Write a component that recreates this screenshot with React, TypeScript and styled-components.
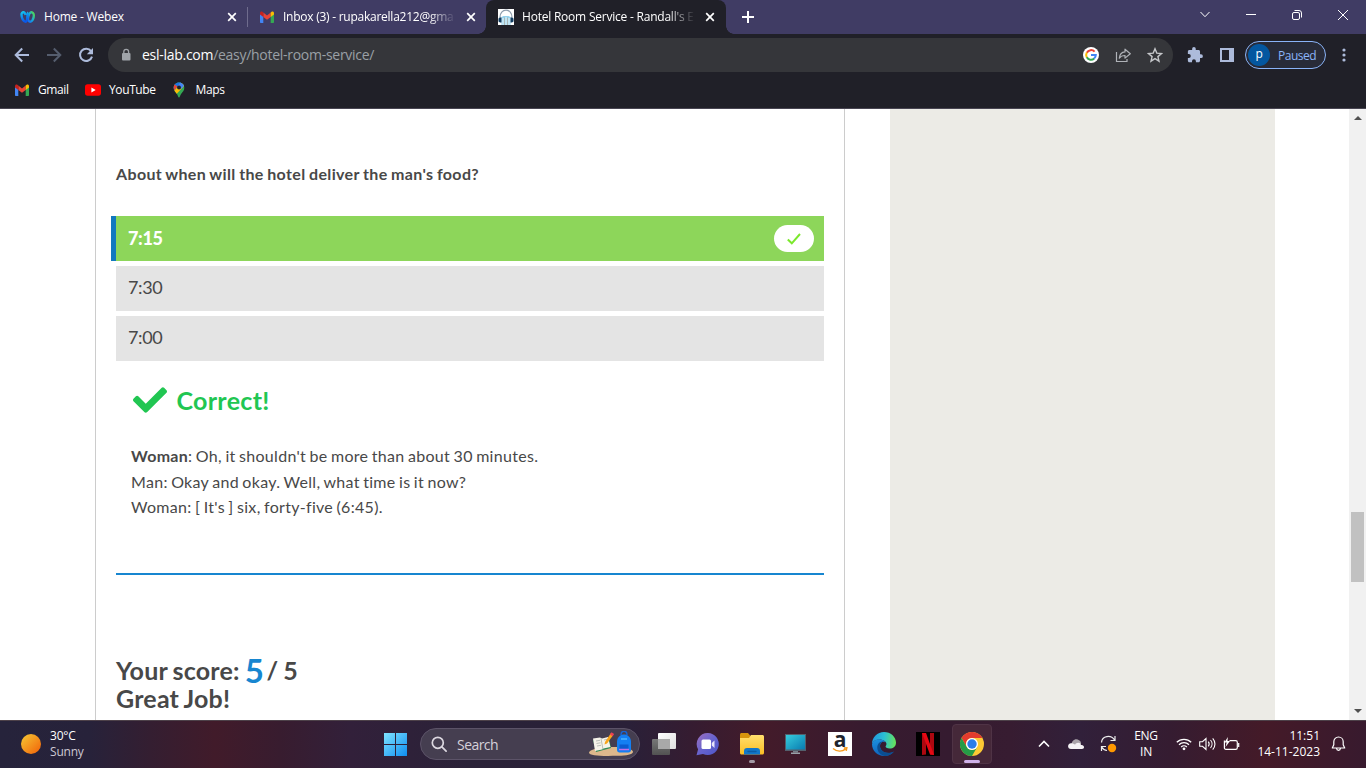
import React from "react";
import styled, { createGlobalStyle, css } from "styled-components";
import { FaCheck } from "react-icons/fa";

const GlobalStyle = createGlobalStyle`
  * { box-sizing: border-box; }
  html, body { margin: 0; padding: 0; overflow: hidden; }
  svg { display: block; flex: none; }
`;

const Screen = styled.div`
  width: 1366px;
  height: 768px;
  display: flex;
  flex-direction: column;
  overflow: hidden;
  background: #fff;
  font-family: "Open Sans", "Noto Sans", sans-serif;
  font-size: 12px;
`;

/* ---------- tab strip ---------- */

const TabStrip = styled.div`
  height: 34px;
  flex: none;
  display: flex;
  background: #403c64;
  color: #fff;
`;

const Tab = styled.div<{ $width: number; $pad: number; $active?: boolean }>`
  width: ${(p) => p.$width}px;
  height: 34px;
  display: flex;
  align-items: center;
  padding: 0 ${(p) => (p.$active ? 11 : 10)}px 0 ${(p) => p.$pad}px;
  position: relative;
  ${(p) =>
    p.$active &&
    css`
      background: #202028;
      border-radius: 8px 8px 0 0;
      &::before,
      &::after {
        content: "";
        position: absolute;
        bottom: 0;
        width: 8px;
        height: 8px;
      }
      &::before {
        left: -8px;
        background: radial-gradient(circle at 0 0, transparent 7.5px, #202028 8px);
      }
      &::after {
        right: -8px;
        background: radial-gradient(circle at 100% 0, transparent 7.5px, #202028 8px);
      }
    `}
`;

const TabTitle = styled.span<{ $fade?: boolean; $spacing?: number }>`
  flex: 1;
  min-width: 0;
  margin: 0 6px 0 8px;
  white-space: nowrap;
  line-height: 18px;
  letter-spacing: ${(p) => p.$spacing ?? 0}px;
  ${(p) =>
    p.$fade &&
    css`
      mask-image: linear-gradient(to right, #000 calc(100% - 32px), transparent calc(100% - 4px));
    `}
`;

const TabDivider = styled.div`
  width: 1px;
  height: 20px;
  margin-top: 7px;
  background: #6f6c8d;
`;

const NewTab = styled.div`
  width: 44px;
  height: 34px;
  display: grid;
  place-items: center;
`;

const WindowControls = styled.div`
  margin-left: auto;
  display: flex;
  height: 29px;
`;

const WindowButton = styled.div`
  width: 46px;
  display: grid;
  place-items: center;
`;

/* ---------- toolbar ---------- */

const Toolbar = styled.div`
  height: 42px;
  flex: none;
  display: flex;
  align-items: center;
  background: #202028;
  padding-left: 6px;
`;

const ToolButton = styled.div<{ $width?: number }>`
  width: ${(p) => p.$width ?? 32}px;
  height: 34px;
  display: grid;
  place-items: center;
  flex: none;
`;

const Omnibox = styled.div`
  width: 1065px;
  height: 34px;
  margin-left: 6px;
  border-radius: 17px;
  background: #35363a;
  display: flex;
  align-items: center;
  padding: 0 2px 0 12px;
`;

const Url = styled.span`
  flex: 1;
  margin-left: 10px;
  font-size: 14px;
  line-height: 20px;
  letter-spacing: -0.28px;
  color: #9aa0a6;
`;

const Host = styled.span`
  color: #fff;
`;

const ProfilePill = styled.div`
  width: 81px;
  height: 28px;
  margin: 0 2px;
  border: 1px solid #8ab4f8;
  border-radius: 14px;
  background: #282b38;
  display: flex;
  align-items: center;
  padding-left: 2px;
  color: #8ab4f8;
  letter-spacing: -0.5px;
`;

const Avatar = styled.span`
  width: 22px;
  height: 22px;
  margin-right: 8px;
  border-radius: 50%;
  background: #0457a0;
  color: #fff;
  text-align: center;
  font-size: 12px;
  line-height: 19px;
`;

const Bookmarks = styled.div`
  height: 33px;
  flex: none;
  display: flex;
  align-items: center;
  padding: 0 0 4px 14px;
  gap: 16px;
  background: #202028;
  border-bottom: 1px solid #484552;
  color: #fff;
`;

const Bookmark = styled.div<{ $gap: number; $spacing: number }>`
  display: flex;
  align-items: center;
  gap: ${(p) => p.$gap}px;
  line-height: 16px;
  letter-spacing: ${(p) => p.$spacing}px;
`;

/* ---------- page ---------- */

const Viewport = styled.div`
  height: 611px;
  flex: none;
  display: flex;
  overflow: hidden;
  background: #fff;
  font-family: Lato, sans-serif;
  color: #484848;
`;

const Article = styled.main`
  width: 750px;
  margin-left: 95px;
  padding: 0 20px;
  border: solid #ccc;
  border-width: 0 1px;
`;

const Question = styled.p`
  margin: 52px 0 29px;
  font-size: 16px;
  font-weight: 700;
  line-height: 26px;
  letter-spacing: 0.35px;
  word-spacing: -0.7px;
`;

const Options = styled.div`
  display: flex;
  flex-direction: column;
  gap: 5px;
`;

const Option = styled.div<{ $correct?: boolean }>`
  height: 45px;
  display: flex;
  align-items: center;
  justify-content: space-between;
  padding: 0 10px 0 12px;
  font-size: 18px;
  letter-spacing: -0.35px;
  background: #e4e4e4;
  ${(p) =>
    p.$correct &&
    css`
      margin-left: -5px;
      border-left: 5px solid #1279be;
      background: #8dd65a;
      color: #fff;
      font-weight: 900;
    `}
`;

const OptionLabel = styled.span<{ $lift: number }>`
  margin-bottom: ${(p) => p.$lift}px;
`;

const CheckPill = styled.span`
  width: 40px;
  height: 27px;
  border-radius: 13.5px;
  background: #fff;
  display: grid;
  place-items: center;
`;

const Feedback = styled.section`
  padding-left: 15px;
`;

const Verdict = styled.div`
  height: 40px;
  margin-top: 19px;
  padding-left: 2px;
  display: flex;
  align-items: center;
  gap: 9.5px;
  color: #21c652;
  font-size: 25px;
  font-weight: 700;
  line-height: 40px;
  letter-spacing: 0.3px;
`;

const VerdictIcon = styled(FaCheck)`
  width: 34px;
  height: 34px;
  margin-top: -1px;
`;

const Transcript = styled.p`
  margin: 23px 0 0;
  font-size: 16px;
  line-height: 25.6px;
  letter-spacing: 0.3px;
  word-spacing: -0.95px;
`;

const Rule = styled.hr`
  height: 2px;
  margin: 53px 0 81px;
  border: 0;
  background: #1786d0;
`;

const Score = styled.div`
  font-size: 25px;
  font-weight: 700;
  line-height: 28px;
  letter-spacing: 0.2px;
  word-spacing: -1.2px;
`;

const Points = styled.span`
  font-size: 33px;
  line-height: 0;
  vertical-align: -3px;
  letter-spacing: -2.5px;
  color: #1786d0;
`;

const Sidebar = styled.aside`
  width: 385px;
  margin-left: 45px;
  background: #ecebe6;
`;

const Scrollbar = styled.div`
  width: 17px;
  margin-left: auto;
  background: #f1f1f1;
  display: flex;
  flex-direction: column;
  align-items: center;
  justify-content: space-between;
  padding: 7px 0;
`;

const Thumb = styled.div`
  width: 13px;
  height: 70px;
  margin-top: 265px;
  background: #c1c1c1;
`;

/* ---------- taskbar ---------- */

const Taskbar = styled.footer`
  height: 48px;
  flex: none;
  display: flex;
  align-items: center;
  padding-bottom: 1px;
  border-top: 1px solid #4d4149;
  color: #fff;
  font-size: 12px;
  background: linear-gradient(
    90deg,
    #26233b 0,
    #27223a 90px,
    #341e31 150px,
    #411b2a 215px,
    #381c2f 280px,
    #32203a 350px,
    #2a2238 470px,
    #2a2038 630px,
    #351c31 690px,
    #431b2a 765px,
    #381b2f 860px,
    #351b30 950px,
    #371c31 1010px,
    #31203a 1080px,
    #351c31 1170px,
    #441a28 1265px,
    #381a2e 1366px
  );
`;

const Weather = styled.div`
  width: 370px;
  display: flex;
  align-items: center;
  padding-left: 21px;
  gap: 9px;
  line-height: 16px;
  letter-spacing: -0.2px;
`;

const Muted = styled.div`
  color: #cdc9d4;
`;

const AppCell = styled.div<{ $width?: number; $indicator?: "dot" | "bar" }>`
  width: ${(p) => p.$width ?? 44}px;
  height: 46px;
  display: grid;
  place-items: center;
  position: relative;
  ${(p) =>
    p.$indicator &&
    css`
      &::after {
        content: "";
        position: absolute;
        bottom: 4px;
        left: 50%;
        transform: translateX(-50%);
        width: ${p.$indicator === "bar" ? 16 : 6}px;
        height: 3px;
        border-radius: 2px;
        background: ${p.$indicator === "bar" ? "#d0b2ea" : "#a39aa5"};
      }
    `}
`;

const ActiveApp = styled.div`
  width: 40px;
  height: 40px;
  border-radius: 4px;
  border: 1px solid #4f3345;
  background: #452839;
  display: grid;
  place-items: center;
`;

const SearchBox = styled.div`
  width: 220px;
  height: 32px;
  margin: 0 2px 0 1px;
  border: 1px solid #5c5368;
  border-radius: 16px;
  background: #453e50;
  display: flex;
  align-items: center;
  padding: 0 5px 0 10px;
  color: #d5d1da;
  font-size: 14px;
  letter-spacing: -0.55px;
`;

const SearchLabel = styled.span`
  flex: 1;
  margin-left: 10px;
`;

const AmazonTile = styled.div`
  width: 24px;
  height: 24px;
  background: #fff;
  color: #20242d;
  display: flex;
  flex-direction: column;
  align-items: center;
  font-size: 21px;
  font-weight: 700;
  line-height: 15px;
`;

const Tray = styled.div`
  margin-left: auto;
  display: flex;
  align-items: center;
  height: 46px;
  padding-right: 20px;
`;

const TrayGroup = styled.div`
  display: flex;
  align-items: center;
  gap: 7px;
`;

const Language = styled.div`
  width: 44px;
  margin-right: 8px;
  text-align: center;
  line-height: 16px;
  letter-spacing: -0.3px;
`;

const Clock = styled.div`
  width: 80px;
  margin-right: 11px;
  text-align: right;
  line-height: 16px;
  white-space: nowrap;
`;

/* ---------- icons ---------- */

const CloseIcon = () => (
  <svg width="10" height="10" viewBox="0 0 10 10" stroke="#fff" strokeWidth="1.7">
    <path d="M1.2 1.2 8.8 8.8M8.8 1.2 1.2 8.8" />
  </svg>
);

const WebexIcon = () => (
  <svg width="16" height="16" viewBox="0 0 16 16" fill="none" strokeWidth="2.7">
    <defs>
      <linearGradient id="wxa" x1="0" y1="0" x2="0.3" y2="1">
        <stop offset="0" stopColor="#12c4f0" />
        <stop offset="1" stopColor="#0a58ea" />
      </linearGradient>
      <linearGradient id="wxb" x1="0.2" y1="1" x2="0.8" y2="0">
        <stop offset="0" stopColor="#1668f0" />
        <stop offset="0.5" stopColor="#13a9dc" />
        <stop offset="1" stopColor="#4fd856" />
      </linearGradient>
    </defs>
    <ellipse cx="10.9" cy="8" rx="2.700" ry="4.800" transform="rotate(14 10.9 8)" stroke="url(#wxb)" strokeWidth="2.400" />
    <path d="M8.200 3.300C6.800 4.500 8.200 12.700 5.600 12.700 3.300 12.700 1.500 8.800 1.500 5.600 1.500 4.200 2.300 3.300 3.400 3.300 4.600 3.300 5.200 4.600 5.600 6" stroke="url(#wxa)" strokeWidth="2.400" />
  </svg>
);

const GmailIcon = () => (
  <svg width="16" height="16" viewBox="0 0 16 16">
    <path d="M1 4.2V13c0 .6.4 1 1 1h2.3V7Z" fill="#4285f4" />
    <path d="M11.7 14H14c.6 0 1-.4 1-1V4.2L11.7 7Z" fill="#34a853" />
    <path d="m4.3 3.5 3.7 3 3.7-3v4.4L8 10.8 4.3 7.9Z" fill="#ea4335" />
    <path d="M1 4.2v1.4l3.3 2.3V3.5l-.7-.6C2.5 2 1 2.7 1 4.2Z" fill="#c5221f" />
    <path d="M15 4.2v1.4l-3.3 2.3V3.5l.7-.6C13.5 2 15 2.7 15 4.2Z" fill="#fbbc04" />
  </svg>
);

const HeadphonesIcon = () => (
  <svg width="16" height="16" viewBox="0 0 16 16">
    <path d="M0 0h16v16H0z" fill="#fff" />
    <path d="M2 9C1.5-1.500 14.500-1.500 14 9" fill="none" stroke="#8e9dad" strokeWidth="1.2" />
    <path d="M3.500 16V8l2-1h5l2 1v8Z" fill="#94d2ee" />
    <path d="M5 16V9M8 16V8M11 16V9" stroke="#e9f7fc" />
    <path d="M6.500 16V8.500M9.500 16V8.500" stroke="#a9b7b5" />
    <path d="M3.500 8.500v5H2L.5 12.500v-3L2 8.500ZM12.500 8.500v5H14l1.500-1v-3L14 8.500Z" fill="#123d61" />
  </svg>
);

const BackIcon = ({ color, flip }: { color: string; flip?: boolean }) => (
  <svg width="16" height="16" viewBox="0 0 16 16" fill="none" stroke={color} strokeWidth="2" transform={flip ? "scale(-1 1)" : undefined}>
    <path d="M15 8H2M8.200 1.500 1.700 8l6.500 6.500" />
  </svg>
);

const ReloadIcon = () => (
  <svg width="16" height="16" viewBox="0 0 16 16" fill="none">
    <path d="M13.100 4.200A6.100 6.100 0 1 0 14 9.600" stroke="#adbbdb" strokeWidth="2" />
    <path d="M15 1v6.200H8.800Z" fill="#adbbdb" />
  </svg>
);

const LockIcon = () => (
  <svg width="12" height="14" viewBox="0 0 12 14">
    <rect x="2" y="5" width="8.500" height="7.500" rx="1" fill="#a0a4a9" />
    <path d="M3.800 5.500V3.700a2.400 2.400 0 0 1 4.800 0v1.800" fill="none" stroke="#a0a4a9" strokeWidth="1.300" />
  </svg>
);

const GoogleIcon = () => (
  <svg width="16" height="16" viewBox="0 0 16 16" fill="none" strokeWidth="2">
    <circle cx="8" cy="8" r="8" fill="#fff" />
    <path d="M11.600 4.700A4.800 4.800 0 0 0 3.800 5.700" stroke="#ea4335" />
    <path d="M3.800 5.600a4.900 4.900 0 0 0 0 4.800" stroke="#fbbc04" />
    <path d="M3.800 10.300a4.800 4.800 0 0 0 7.400 1.200" stroke="#34a853" />
    <path d="M11.100 11.600A4.800 4.800 0 0 0 12.800 8H8" stroke="#4285f4" />
  </svg>
);

const ShareIcon = () => (
  <svg width="16" height="16" viewBox="0 0 16 16" fill="none" stroke="#b0b3b8" strokeWidth="1.200">
    <path d="M1.500 5v9.500H12V12" />
    <path d="M10 2.200 15.300 6.700 10 11.100V8.500c-2.800 0-4.500.8-5.700 2.700.3-3.700 2.300-6 5.700-6.300Z" strokeLinejoin="round" />
  </svg>
);

const StarIcon = () => (
  <svg width="16" height="16" viewBox="0 0 16 16" fill="none" stroke="#c5c7ca" strokeWidth="1.400">
    <path d="m8 1.800 1.800 4.300 4.700.4-3.600 3.100 1.100 4.600L8 11.700l-4 2.500 1.100-4.600-3.600-3.100 4.700-.4Z" />
  </svg>
);

const PuzzleIcon = () => (
  <svg width="18" height="18" viewBox="0 0 24 24" fill="#adbbdb">
    <path d="M20 11h-1.300V7.200c0-1.100-.9-2-2-2H13V3.800a2.400 2.400 0 0 0-4.800 0v1.400H4.500c-1.100 0-2 .9-2 2v3.600h1.300a2.600 2.600 0 0 1 0 5.200H2.500v3.600c0 1.100.9 2 2 2H8v-1.300a2.600 2.600 0 0 1 5.200 0v1.300h3.500c1.100 0 2-.9 2-2V16H20a2.500 2.500 0 0 0 0-5Z" />
  </svg>
);

const SidePanelIcon = () => (
  <svg width="14" height="14" viewBox="0 0 14 14">
    <path d="M0 0h14v14H0zM2 2v10h7V2Z" fill="#adbbdb" fillRule="evenodd" />
  </svg>
);

const YouTubeIcon = () => (
  <svg width="16" height="16" viewBox="0 0 16 16">
    <rect y="2.300" width="16" height="11.400" rx="2.600" fill="#f00" />
    <path d="M6.400 5.500v5l4.300-2.500Z" fill="#fff" />
  </svg>
);

const MapsIcon = () => (
  <svg width="12" height="16" viewBox="0 0 12 16">
    <defs>
      <clipPath id="pin">
        <path d="M6 .4C2.900.4.700 2.800.700 5.700c0 3 1.800 4.200 3.200 6.300.9 1.300 1.300 3.600 2.100 3.600s1.200-2.300 2.100-3.600c1.400-2.100 3.200-3.300 3.200-6.300C11.300 2.800 9.100.4 6 .4Z" />
      </clipPath>
    </defs>
    <g clipPath="url(#pin)">
      <path d="M0 0h12v16H0z" fill="#34a853" />
      <path d="M0 10 9 0H0Z" fill="#1a73e8" />
      <path d="m0 1 4.500 3.500L1 8.500H0Z" fill="#ea4335" />
      <path d="M1 9 8.500 0H12v3L3 12.500Z" fill="#fbbc04" />
      <path d="M4.500 4.500 7.500 0H12v3L8 7Z" fill="#4285f4" />
    </g>
    <circle cx="6" cy="5.600" r="2" fill="#202028" />
  </svg>
);

const SunIcon = () => (
  <svg width="20" height="20" viewBox="0 0 20 20">
    <defs>
      <linearGradient id="sun" x1="0" y1="0" x2="1" y2="1">
        <stop offset="0.100" stopColor="#f5bf30" />
        <stop offset="0.900" stopColor="#f26a0c" />
      </linearGradient>
    </defs>
    <circle cx="10" cy="10" r="10" fill="url(#sun)" />
  </svg>
);

const StartIcon = () => (
  <svg width="24" height="24" viewBox="0 0 24 24">
    <defs>
      <linearGradient id="win" x1="0" y1="0" x2="1" y2="1">
        <stop offset="0" stopColor="#7fe4ff" />
        <stop offset="1" stopColor="#0e8df0" />
      </linearGradient>
    </defs>
    <path d="M1 1h11v11H1zM13 1h11v11H13zM1 13h11v11H1zM13 13h11v11H13z" fill="url(#win)" />
  </svg>
);

const SearchIcon = () => (
  <svg width="16" height="16" viewBox="0 0 16 16" fill="none" stroke="#dcd8e0" strokeWidth="1.700">
    <circle cx="6.800" cy="6.800" r="5.500" />
    <path d="m10.900 10.900 4.200 4.200" strokeLinecap="round" />
  </svg>
);

const SchoolIcon = () => (
  <svg width="46" height="26" viewBox="0 0 46 26">
    <path d="M1 21.500c0-2 8-5 16-5.500h18c6 .5 10.500 3.500 10 5-.8 2.800-6 3.500-15 3.800C14 25.200 1 25 1 21.500Z" fill="#dcb88c" />
    <path d="m5 9 16-2 2 10-15 4Z" fill="#2e8b57" />
    <path d="m5 7.500 7-1 2 1 6-1.500 2.500 10-7 1.500-1.500 1-7 1.500Z" fill="#f5f3e9" />
    <path d="m13 7.500 2 11M8 10l4-.7M8.500 12.500l4-.7M9 15l4-.7M16 9l3-.6M17 11.500l3-.6" stroke="#a9b0aa" strokeWidth=".8" />
    <path d="m17 11 6-9 2.500 1.800-6.500 8.700-2.500 1Z" fill="#f8a51b" />
    <path d="m22 3.400 1.500-2.200 2.600 1.700-1.600 2.300Z" fill="#ee4055" />
    <path d="M33 4c0-5 6-5 6 0" fill="none" stroke="#1465d8" strokeWidth="1.500" />
    <path d="M29 11c0-10 14-10 14 0v8c0 1.500-1 2.500-2.500 2.500h-9c-1.500 0-2.500-1-2.500-2.500Z" fill="#147ff2" />
    <path d="M31.500 13.500h9V19h-9Z" fill="#0b5bd0" />
    <path d="M31 18.500h10" stroke="#c06ee8" strokeWidth="1.500" />
    <path d="M33 8h6" stroke="#4db4ff" strokeWidth="1.500" />
  </svg>
);

const TaskViewIcon = () => (
  <svg width="24" height="24" viewBox="0 0 24 24">
    <defs>
      <linearGradient id="tvw" x1="0" y1="0" x2="1" y2="1">
        <stop offset="0" stopColor="#fff" />
        <stop offset="1" stopColor="#dedede" />
      </linearGradient>
      <linearGradient id="tvd" x1="0" y1="0" x2="0" y2="1">
        <stop offset="0" stopColor="#777" />
        <stop offset="1" stopColor="#525252" />
      </linearGradient>
    </defs>
    <rect y="7" width="18" height="16" rx="1" fill="url(#tvd)" />
    <rect x="6" y="1" width="18" height="16" rx="1" fill="url(#tvw)" />
    <path d="M6 7h12v10H6z" fill="#a9a9a9" />
  </svg>
);

const ChatIcon = () => (
  <svg width="24" height="24" viewBox="0 0 24 24">
    <defs>
      <linearGradient id="chat" x1="0" y1="0" x2="1" y2="1">
        <stop offset="0" stopColor="#9e70bd" />
        <stop offset="0.500" stopColor="#6763cd" />
        <stop offset="1" stopColor="#4c55c8" />
      </linearGradient>
    </defs>
    <path d="M12 1a11 11 0 1 1-5 20.900L.5 23.300l1.600-6A11 11 0 0 1 12 1Z" fill="url(#chat)" />
    <rect x="5.500" y="7.500" width="9.500" height="9.500" rx="1.500" fill="#fff" />
    <path d="m15.800 11 2.700-2.500v7.500l-2.700-2.400Z" fill="#e8e6fb" />
  </svg>
);

const FolderIcon = () => (
  <svg width="24" height="24" viewBox="0 0 24 24">
    <defs>
      <linearGradient id="fold" x1="0" y1="0" x2="0" y2="1">
        <stop offset="0" stopColor="#ffdf6e" />
        <stop offset="1" stopColor="#fbbe24" />
      </linearGradient>
    </defs>
    <path d="M0 2.500C0 1.700.700 1 1.500 1H8l2.500 3v4H0Z" fill="#d6940c" />
    <path d="M0 6h9l2-3h11.500c.8 0 1.500.700 1.500 1.500V21c0 .8-.7 1.500-1.500 1.500h-21C.700 22.500 0 21.800 0 21Z" fill="url(#fold)" />
    <path d="M4 22.500V19c0-1.900 1.100-3 3-3h10c1.900 0 3 1.100 3 3v3.500Z" fill="#1277c9" />
    <path d="M8 19.500h8" stroke="#0b5ca4" strokeWidth="1.400" strokeLinecap="round" />
  </svg>
);

const MonitorIcon = () => (
  <svg width="24" height="24" viewBox="0 0 24 24">
    <defs>
      <linearGradient id="mon" x1="0" y1="0" x2="1" y2="1">
        <stop offset="0" stopColor="#36cbdc" />
        <stop offset="1" stopColor="#087bb0" />
      </linearGradient>
    </defs>
    <path d="M1 2h21v17H1z" fill="#53606d" />
    <path d="M2 3h19v14.500H2z" fill="url(#mon)" />
    <path d="M9 19h5v1.500H9z" fill="#77808a" />
    <path d="M7 20.500h9V22H7z" fill="#98a0a8" />
  </svg>
);

const AmazonSmile = () => (
  <svg width="18" height="6" viewBox="0 0 18 6" fill="none" stroke="#f79a1c" strokeWidth="1.500">
    <path d="M2 1.500C6 4.700 11 4.700 14.500 2.200M12.800 1l3-.1-.6 3" />
  </svg>
);

const EdgeIcon = () => (
  <svg width="24" height="24" viewBox="0 0 24 24">
    <defs>
      <linearGradient id="eda" x1="0" y1="0.300" x2="1" y2="0.400">
        <stop offset="0" stopColor="#2096df" />
        <stop offset="0.500" stopColor="#2bbfd3" />
        <stop offset="1" stopColor="#66e25c" />
      </linearGradient>
      <linearGradient id="edb" x1="0" y1="0" x2="0.300" y2="1">
        <stop offset="0" stopColor="#1d92e0" />
        <stop offset="1" stopColor="#0e62bb" />
      </linearGradient>
    </defs>
    <path d="M0 12C0 5 5.400 0 12 0s12 4.800 12 10.500c0 4-2.900 6-6.200 6-3 0-4.500-1.200-4.200-2.300 1.300-1.200 1.200-3.600-.6-4.900C9 6.400 2 7 0 12Z" fill="url(#eda)" />
    <path d="M0 12c1.500-4.500 6.300-5.600 10-4.300 2 .7 3 1.700 3.300 2.800C10.500 8.700 8 11 8 14c0 5 5.300 8 11 6.700 1.200-.3 2.300-.9 3-1.300C19.500 22.500 16 24 12 24 5.300 24 0 18.700 0 12Z" fill="url(#edb)" />
    <path d="M11.500 9.700C8.500 10 7.700 13 8.100 15.300c.8 4.500 6.700 6.700 12 5 1.200-.4 2.400-1.300 2.100-1-2.500 3.200-5.700 4.700-9.200 4.700-4.800-1-7.700-4.800-7.700-8.600 0-3.200 2.700-6.400 6.200-5.700Z" fill="#0b4e91" />
  </svg>
);

const NetflixIcon = () => (
  <svg width="24" height="24" viewBox="0 0 24 24">
    <path d="M0 0h24v24H0z" fill="#000" />
    <path d="M6 1h4v21.500l-4 .5ZM14 1h4v22l-4-.5Z" fill="#ad0810" />
    <path d="M6 1h4l8 22-4-.5Z" fill="#e50914" />
  </svg>
);

const ChromeIcon = () => (
  <svg width="24" height="24" viewBox="0 0 24 24">
    <circle cx="12" cy="12" r="12" fill="#fcc934" />
    <path d="M1.600 6A12 12 0 0 1 22.400 6H12a6 6 0 0 0-5.200 9Z" fill="#e33b2e" />
    <path d="M1.600 6A12 12 0 0 0 12 24l5.200-9a6 6 0 0 1-10.400 0Z" fill="#259b47" />
    <circle cx="12" cy="12" r="6" fill="#fff" />
    <circle cx="12" cy="12" r="4.700" fill="#2b7de9" />
  </svg>
);

const ChevronUp = () => (
  <svg width="12" height="8" viewBox="0 0 12 8" fill="none" stroke="#fff" strokeWidth="1.600">
    <path d="m1 6.500 5-5 5 5" />
  </svg>
);

const CloudIcon = () => (
  <svg width="16" height="12" viewBox="0 0 16 12">
    <path d="M3.500 8C3 2 8 0 11 2.200 13 3 13 5 13 6Z" fill="#aaa4aa" />
    <path d="M3 11C-.9 11-.9 5.500 3 5.300c1.800 0 3 .600 4 1.400C8.300 4 12.500 4 13 7c3.600-.5 4 4 1 4Z" fill="#f5f3f5" />
  </svg>
);

const SyncIcon = () => (
  <svg width="17" height="18" viewBox="0 0 17 18" fill="none" stroke="#eee" strokeWidth="1.200">
    <path d="M1.500 7.500C2 .5 11-.5 14.500 5M15 1v4.500h-4.500M7 15.500c-2.300-.2-4-1.300-5-3.300M1.500 16v-4.500H6" />
    <circle cx="12" cy="13" r="4.200" fill="#ff9800" stroke="none" />
  </svg>
);

const WifiIcon = () => (
  <svg width="16" height="14" viewBox="0 0 16 14" fill="none" stroke="#fff" strokeWidth="1.300">
    <path d="M.8 5.300a10.200 10.200 0 0 1 14.400 0M3 7.700a7.100 7.100 0 0 1 10 0M5.200 10a4 4 0 0 1 5.600 0" />
    <circle cx="8" cy="11.800" r="1.400" fill="#fff" stroke="none" />
  </svg>
);

const SpeakerIcon = () => (
  <svg width="17" height="14" viewBox="0 0 17 14" fill="none" stroke="#fff" strokeWidth="1.100">
    <path d="M.7 4.700h2.800L7 1.500v11L3.500 9.300H.700ZM9.300 4.700c1 1.300 1 3.300 0 4.600M11.500 3c2 2.300 2 5.700 0 8M13.700 1.300c3 3.300 3 8.100 0 11.400" />
  </svg>
);

const BatteryIcon = () => (
  <svg width="17" height="15" viewBox="0 0 17 15" fill="none" stroke="#fff" strokeWidth="1.200">
    <path d="M6.500 3.700h6.200c1 0 1.600.7 1.600 1.600v5.400c0 1-.6 1.600-1.600 1.600H3c-1 0-1.600-.6-1.600-1.600V3.500M15.700 6v4" />
    <path d="M4.800 0 1.500 5.500h2.200L2.500 10l4.500-6H4.500Z" fill="#fff" stroke="none" />
  </svg>
);

const BellIcon = () => (
  <svg width="15" height="16" viewBox="0 0 15 16" fill="none" stroke="#fff" strokeWidth="1.200">
    <path d="M7.500 1a4.700 4.700 0 0 0-4.700 4.700v3L1.300 12h12.400l-1.500-3.300v-3A4.700 4.700 0 0 0 7.500 1ZM5.500 12.300c.3 2.700 3.700 2.700 4 0" strokeLinejoin="round" />
  </svg>
);

const options = [{ label: "7:15", correct: true }, { label: "7:30" }, { label: "7:00" }];

export default function App() {
  return (
    <Screen>
      <GlobalStyle />
      <TabStrip>
        <Tab $width={247} $pad={20}>
          <WebexIcon />
          <TabTitle $spacing={-0.2}>Home - Webex</TabTitle>
          <CloseIcon />
        </Tab>
        <TabDivider />
        <Tab $width={238} $pad={11}>
          <GmailIcon />
          <TabTitle $fade $spacing={-0.25}>Inbox (3) - rupakarella212@gma</TabTitle>
          <CloseIcon />
        </Tab>
        <Tab $width={240} $pad={12} $active>
          <HeadphonesIcon />
          <TabTitle $fade $spacing={-0.22}>Hotel Room Service - Randall's E</TabTitle>
          <CloseIcon />
        </Tab>
        <NewTab>
          <svg width="12" height="12" viewBox="0 0 12 12" stroke="#fff" strokeWidth="2">
            <path d="M6 0v12M0 6h12" />
          </svg>
        </NewTab>
        <WindowControls>
          <WindowButton>
            <svg width="10" height="7" viewBox="0 0 10 7" fill="none" stroke="#fff">
              <path d="m.5 1 4.500 4.700L9.500 1" />
            </svg>
          </WindowButton>
          <WindowButton>
            <svg width="10" height="1" viewBox="0 0 10 1">
              <path d="M0 0h10v1H0z" fill="#fff" />
            </svg>
          </WindowButton>
          <WindowButton>
            <svg width="10" height="10" viewBox="0 0 10 10" fill="none" stroke="#fff">
              <rect x=".5" y="2.500" width="7" height="7" rx="1.500" />
              <path d="M2.500.5H7A2.500 2.500 0 0 1 9.500 3v4.500" />
            </svg>
          </WindowButton>
          <WindowButton>
            <svg width="10" height="10" viewBox="0 0 10 10" stroke="#fff">
              <path d="m0 0 10 10M10 0 0 10" />
            </svg>
          </WindowButton>
        </WindowControls>
      </TabStrip>

      <Toolbar>
        <ToolButton><BackIcon color="#adbbdb" /></ToolButton>
        <ToolButton><BackIcon color="#555d6e" flip /></ToolButton>
        <ToolButton><ReloadIcon /></ToolButton>
        <Omnibox>
          <LockIcon />
          <Url><Host>esl-lab.com</Host>/easy/hotel-room-service/</Url>
          <ToolButton><GoogleIcon /></ToolButton>
          <ToolButton><ShareIcon /></ToolButton>
          <ToolButton><StarIcon /></ToolButton>
        </Omnibox>
        <ToolButton $width={44}><PuzzleIcon /></ToolButton>
        <ToolButton $width={20}><SidePanelIcon /></ToolButton>
        <ToolButton $width={6} />
        <ProfilePill><Avatar>p</Avatar>Paused</ProfilePill>
        <ToolButton>
          <svg width="4" height="14" viewBox="0 0 4 14" fill="#adbbdb">
            <circle cx="2" cy="2" r="1.600" />
            <circle cx="2" cy="7" r="1.600" />
            <circle cx="2" cy="12" r="1.600" />
          </svg>
        </ToolButton>
      </Toolbar>

      <Bookmarks>
        <Bookmark $gap={8} $spacing={-0.4}><GmailIcon />Gmail</Bookmark>
        <Bookmark $gap={8.500} $spacing={-0.4}><YouTubeIcon />YouTube</Bookmark>
        <Bookmark $gap={10} $spacing={-0.35}>
          <ToolButton $width={14}><MapsIcon /></ToolButton>
          Maps
        </Bookmark>
      </Bookmarks>

      <Viewport>
        <Article>
          <Question>About when will the hotel deliver the man's food?</Question>
          <Options>
            {options.map((o) => (
              <Option key={o.label} $correct={o.correct}>
                <OptionLabel $lift={o.correct ? 2 : 3}>{o.label}</OptionLabel>
                {o.correct && (
                  <CheckPill>
                    <svg width="14" height="12" viewBox="0 0 14 12" fill="none" stroke="#7be82c" strokeWidth="2">
                      <path d="m.8 6.500 4 3.800L13 1" />
                    </svg>
                  </CheckPill>
                )}
              </Option>
            ))}
          </Options>
          <Feedback>
            <Verdict><VerdictIcon />Correct!</Verdict>
            <Transcript>
              <b>Woman</b>: Oh, it shouldn't be more than about 30 minutes.<br />
              Man: Okay and okay. Well, what time is it now?<br />
              Woman: [ It's ] six, forty-five (6:45).
            </Transcript>
          </Feedback>
          <Rule />
          <Score>Your score: <Points>5</Points> / 5</Score>
          <Score>Great Job!</Score>
        </Article>
        <Sidebar />
        <Scrollbar>
          <svg width="8" height="4" viewBox="0 0 8 4" fill="#505050"><path d="M0 4 4 0l4 4Z" /></svg>
          <Thumb />
          <svg width="8" height="4" viewBox="0 0 8 4" fill="#505050"><path d="m0 0 4 4 4-4Z" /></svg>
        </Scrollbar>
      </Viewport>

      <Taskbar>
        <Weather>
          <SunIcon />
          <div>
            <div>30°C</div>
            <Muted>Sunny</Muted>
          </div>
        </Weather>
        <AppCell $width={49}><StartIcon /></AppCell>
        <SearchBox>
          <SearchIcon />
          <SearchLabel>Search</SearchLabel>
          <SchoolIcon />
        </SearchBox>
        <AppCell><TaskViewIcon /></AppCell>
        <AppCell><ChatIcon /></AppCell>
        <AppCell $indicator="dot"><FolderIcon /></AppCell>
        <AppCell><MonitorIcon /></AppCell>
        <AppCell><AmazonTile>a<AmazonSmile /></AmazonTile></AppCell>
        <AppCell><EdgeIcon /></AppCell>
        <AppCell><NetflixIcon /></AppCell>
        <AppCell $indicator="bar"><ActiveApp><ChromeIcon /></ActiveApp></AppCell>
        <Tray>
          <AppCell $width={32}><ChevronUp /></AppCell>
          <AppCell $width={32}><CloudIcon /></AppCell>
          <AppCell $width={32}><SyncIcon /></AppCell>
          <Language><div>ENG</div><div>IN</div></Language>
          <TrayGroup>
            <WifiIcon />
            <SpeakerIcon />
            <BatteryIcon />
          </TrayGroup>
          <Clock><div>11:51</div><div>14-11-2023</div></Clock>
          <BellIcon />
        </Tray>
      </Taskbar>
    </Screen>
  );
}
